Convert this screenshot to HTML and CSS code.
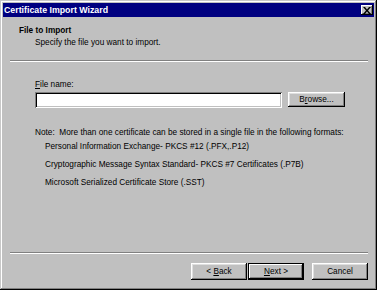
FILE: index.html
```html
<!DOCTYPE html>
<html>
<head>
<meta charset="utf-8">
<link rel="stylesheet" href="styles.css">
</head>
<body>
<div class="window">
  <div class="titlebar">
    <span class="title">Certificate Import Wizard</span>
    <span class="close"><svg width="8" height="7" viewBox="0 0 8 7"><path d="M0 0h2l2 2.5L6 0h2L5 3.5 8 7H6L4 4.5 2 7H0l3-3.5z" fill="#000"/></svg></span>
  </div>
  <div class="header">
    <div class="h-title">File to Import</div>
    <div class="h-sub">Specify the file you want to import.</div>
  </div>
  <div class="sep"></div>
  <div class="content">
    <div class="label"><u>F</u>ile name:</div>
    <div class="row">
      <div class="field"></div>
      <div class="btn browse"><span>B<u>r</u>owse...</span></div>
    </div>
    <div class="note">Note:&nbsp; More than one certificate can be stored in a single file in the following formats:</div>
    <ul class="formats">
      <li>Personal Information Exchange- PKCS #12 (.PFX,.P12)</li>
      <li>Cryptographic Message Syntax Standard- PKCS #7 Certificates (.P7B)</li>
      <li>Microsoft Serialized Certificate Store (.SST)</li>
    </ul>
  </div>
  <div class="sep bottom-sep"></div>
  <div class="buttons">
    <div class="btn"><span>&lt; <u>B</u>ack</span></div>
    <div class="btn default"><span><u>N</u>ext &gt;</span></div>
    <div class="btn cancel"><span>Cancel</span></div>
  </div>
</div>
</body>
</html>
```
FILE: styles.css
```css
html, body { margin: 0; padding: 0; background: #c0c0c0; }
body { font-family: "Liberation Sans", Arial, sans-serif; font-size: 8.25px; color: #000; }

.window {
  width: 377px; height: 290px; box-sizing: border-box;
  background: #c0c0c0;
  padding: 3px;
  display: flex; flex-direction: column;
  box-shadow: inset -1px -1px #000, inset 1px 1px #c8c8c8, inset -2px -2px #808080, inset 2px 2px #fff;
}

.titlebar {
  height: 14px; background: #000080; color: #fff;
  display: flex; align-items: center; justify-content: space-between;
  padding-left: 1px;
}
.title { font-weight: bold; font-size: 8.8px; }
.close {
  width: 12px; height: 10px; margin-right: 1px; background: #c0c0c0;
  display: flex; align-items: center; justify-content: center;
  box-shadow: inset -1px -1px #000, inset 1px 1px #fff, inset -2px -2px #808080;
}
.close svg { display: block; margin-left: -1px; }

.header { padding: 8px 0 0 16px; line-height: 11px; }
.h-title { font-weight: bold; }
.h-sub { margin-top: 1px; padding-left: 16px; }

.sep {
  height: 1px; border-bottom: 1px solid #fff; background: #808080;
  margin: 12px 6px 0 7px;
}

.content { padding-left: 32px; line-height: 11px; flex: 1; }
.label { margin-top: 17px; }
.row { display: flex; align-items: flex-start; margin-top: 2px; }
.field {
  width: 247px; height: 16px; box-sizing: border-box; background: #fff;
  box-shadow: inset 1px 1px #808080, inset -1px -1px #fff, inset 2px 2px #000, inset -2px -2px #c0c0c0;
}
.btn {
  width: 56px; height: 17px; box-sizing: border-box;
  display: flex; align-items: center; justify-content: center;
  background: #c0c0c0;
  box-shadow: inset -1px -1px #000, inset 1px 1px #fff, inset -2px -2px #808080, inset 2px 2px #dfdfdf;
}
.browse { margin-left: 6px; height: 15px; width: 57px; }
.note { margin-top: 19px; }
.formats { list-style: none; margin: 3px 0 0; padding: 0 0 0 10px; }
.formats li { margin-top: 7px; }
.formats li:first-child { margin-top: 0; }

.bottom-sep { margin-top: 0; }
.buttons { display: flex; justify-content: flex-end; margin: 9px 6px 7px 0; }
.default { box-shadow: inset 0 0 0 1px #000, inset -2px -2px #000, inset 2px 2px #fff, inset -3px -3px #808080; margin-left: 1px; }
.cancel { margin-left: 8px; }
u { text-decoration: underline; text-underline-offset: 1px; }
```
